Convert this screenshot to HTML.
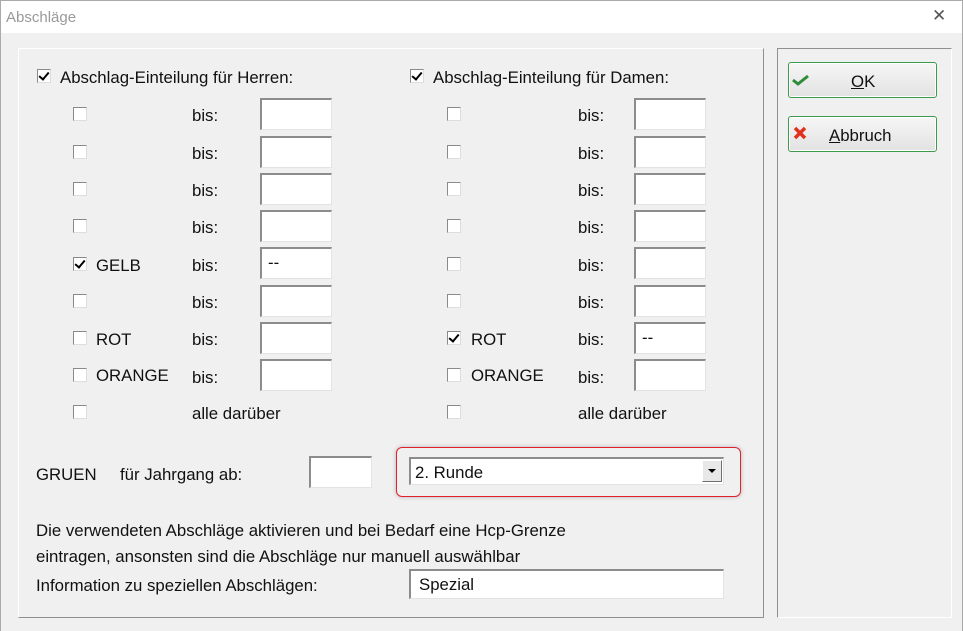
<!DOCTYPE html>
<html><head><meta charset="utf-8"><style>
*{margin:0;padding:0;box-sizing:border-box}
body{width:963px;height:631px;background:#f0f0f0;position:relative;overflow:hidden;font-family:"Liberation Sans","DejaVu Sans",sans-serif;font-size:16.8px;color:#111}
.a{position:absolute;white-space:nowrap;line-height:18px;margin-top:2px}
.title{position:absolute;left:0;top:0;width:963px;height:33px;background:#fff;border-top:1px solid #aaa;border-left:1px solid #aaa;border-right:1px solid #aaa}
.cb{position:absolute;width:14px;height:14px;background:#fff;border:1px solid #8a8a8a;border-right-color:#ddd;border-bottom-color:#ddd}
.cb.c::after{content:"";position:absolute;left:3px;top:0px;width:4px;height:8px;border-right:2px solid #000;border-bottom:2px solid #000;transform:rotate(40deg)}
.in{position:absolute;background:#fff;border-top:2px solid #8c8c8c;border-left:2px solid #8c8c8c;border-right:1px solid #e3e3e3;border-bottom:1px solid #e3e3e3;padding-left:6px;line-height:28px}
.btn{position:absolute;left:788px;width:149px;height:36px;border:1px solid #3c9a4a;border-radius:3px;background:linear-gradient(#f6f6f6,#e2e2e2);box-shadow:inset 0 0 0 1px #fff}
</style></head><body>
<div class="title"></div>
<div class="a" style="left:6px;top:7px;color:#999;font-size:15px">Abschläge</div>
<div class="a" style="left:932px;top:5px;font-size:17px;color:#555">✕</div>
<div style="position:absolute;left:0;top:33px;width:1px;height:598px;background:#aaa"></div>
<div style="position:absolute;left:962px;top:33px;width:1px;height:598px;background:#aaa"></div>
<div style="position:absolute;left:18px;top:48px;width:746px;height:570px;border-top:1px solid #fff;border-left:1px solid #fff;border-right:1px solid #909090;border-bottom:1px solid #909090"></div>
<div style="position:absolute;left:777px;top:48px;width:175px;height:570px;border-top:1px solid #909090;border-left:1px solid #909090;border-right:1px solid #fff;border-bottom:1px solid #fff"></div>

<div class="cb c" style="left:37px;top:69px"></div><div class="a" style="left:60px;top:67px">Abschlag-Einteilung für Herren:</div>
<div class="cb c" style="left:410px;top:69px"></div><div class="a" style="left:433px;top:67px">Abschlag-Einteilung für Damen:</div>

<div class="cb" style="left:73px;top:107px"></div><div class="a" style="left:192px;top:105px">bis:</div><div class="in" style="left:260px;top:98px;width:72px;height:32px"></div>
<div class="cb" style="left:73px;top:145px"></div><div class="a" style="left:192px;top:143px">bis:</div><div class="in" style="left:260px;top:136px;width:72px;height:32px"></div>
<div class="cb" style="left:73px;top:182px"></div><div class="a" style="left:192px;top:180px">bis:</div><div class="in" style="left:260px;top:173px;width:72px;height:32px"></div>
<div class="cb" style="left:73px;top:219px"></div><div class="a" style="left:192px;top:217px">bis:</div><div class="in" style="left:260px;top:210px;width:72px;height:32px"></div>
<div class="cb c" style="left:73px;top:257px"></div><div class="a" style="left:96px;top:255px">GELB</div><div class="a" style="left:192px;top:255px">bis:</div><div class="in" style="left:260px;top:247px;width:72px;height:32px">--</div>
<div class="cb" style="left:73px;top:294px"></div><div class="a" style="left:192px;top:292px">bis:</div><div class="in" style="left:260px;top:285px;width:72px;height:32px"></div>
<div class="cb" style="left:73px;top:331px"></div><div class="a" style="left:96px;top:329px">ROT</div><div class="a" style="left:192px;top:329px">bis:</div><div class="in" style="left:260px;top:322px;width:72px;height:32px"></div>
<div class="cb" style="left:73px;top:368px"></div><div class="a" style="left:96px;top:365px">ORANGE</div><div class="a" style="left:192px;top:367px">bis:</div><div class="in" style="left:260px;top:359px;width:72px;height:32px"></div>
<div class="cb" style="left:73px;top:405px"></div><div class="a" style="left:192px;top:403px">alle darüber</div>

<div class="cb" style="left:447px;top:107px"></div><div class="a" style="left:578px;top:105px">bis:</div><div class="in" style="left:634px;top:98px;width:72px;height:32px"></div>
<div class="cb" style="left:447px;top:145px"></div><div class="a" style="left:578px;top:143px">bis:</div><div class="in" style="left:634px;top:136px;width:72px;height:32px"></div>
<div class="cb" style="left:447px;top:182px"></div><div class="a" style="left:578px;top:180px">bis:</div><div class="in" style="left:634px;top:173px;width:72px;height:32px"></div>
<div class="cb" style="left:447px;top:219px"></div><div class="a" style="left:578px;top:217px">bis:</div><div class="in" style="left:634px;top:210px;width:72px;height:32px"></div>
<div class="cb" style="left:447px;top:257px"></div><div class="a" style="left:578px;top:255px">bis:</div><div class="in" style="left:634px;top:247px;width:72px;height:32px"></div>
<div class="cb" style="left:447px;top:294px"></div><div class="a" style="left:578px;top:292px">bis:</div><div class="in" style="left:634px;top:285px;width:72px;height:32px"></div>
<div class="cb c" style="left:447px;top:331px"></div><div class="a" style="left:471px;top:329px">ROT</div><div class="a" style="left:578px;top:329px">bis:</div><div class="in" style="left:634px;top:322px;width:72px;height:32px">--</div>
<div class="cb" style="left:447px;top:368px"></div><div class="a" style="left:471px;top:365px">ORANGE</div><div class="a" style="left:578px;top:367px">bis:</div><div class="in" style="left:634px;top:359px;width:72px;height:32px"></div>
<div class="cb" style="left:447px;top:405px"></div><div class="a" style="left:578px;top:403px">alle darüber</div>

<div class="a" style="left:36px;top:464px">GRUEN</div>
<div class="a" style="left:120px;top:464px">für Jahrgang ab:</div>
<div class="in" style="left:309px;top:456px;width:63px;height:32px"></div>
<div style="position:absolute;left:396px;top:447px;width:345px;height:50px;border:1.5px solid #e0202a;border-radius:6px;box-shadow:0 0 4px rgba(0,0,0,.25)"></div>
<div class="in" style="left:409px;top:457px;width:315px;height:28px;line-height:28px;padding-left:4px">2. Runde</div>
<div style="position:absolute;left:702px;top:460px;width:20px;height:22px;background:#e8e8e8;border:1px solid #fff;border-right-color:#707070;border-bottom-color:#707070"></div>
<div style="position:absolute;left:708px;top:469px;width:0;height:0;border-left:4px solid transparent;border-right:4px solid transparent;border-top:4px solid #000"></div>

<div class="a" style="left:36px;top:520px">Die verwendeten Abschläge aktivieren und bei Bedarf eine Hcp-Grenze</div>
<div class="a" style="left:36px;top:546px">eintragen, ansonsten sind die Abschläge nur manuell auswählbar</div>
<div class="a" style="left:36px;top:575px">Information zu speziellen Abschlägen:</div>
<div class="in" style="left:409px;top:569px;width:315px;height:30px;line-height:28px;padding-left:8px">Spezial</div>

<div class="btn" style="top:62px"></div>
<svg style="position:absolute;left:792px;top:74px" width="18" height="12"><path d="M1 6 L6 10 L16 2" stroke="#2e8b3a" stroke-width="3" fill="none"/></svg>
<div class="a" style="left:851px;top:71px"><u>O</u>K</div>
<div class="btn" style="top:116px"></div>
<svg style="position:absolute;left:793px;top:126px" width="14" height="14"><path d="M2 2 L12 12 M12 2 L2 12" stroke="#e03020" stroke-width="3.5" fill="none"/></svg>
<div class="a" style="left:829px;top:125px"><u>A</u>bbruch</div>
</body></html>
